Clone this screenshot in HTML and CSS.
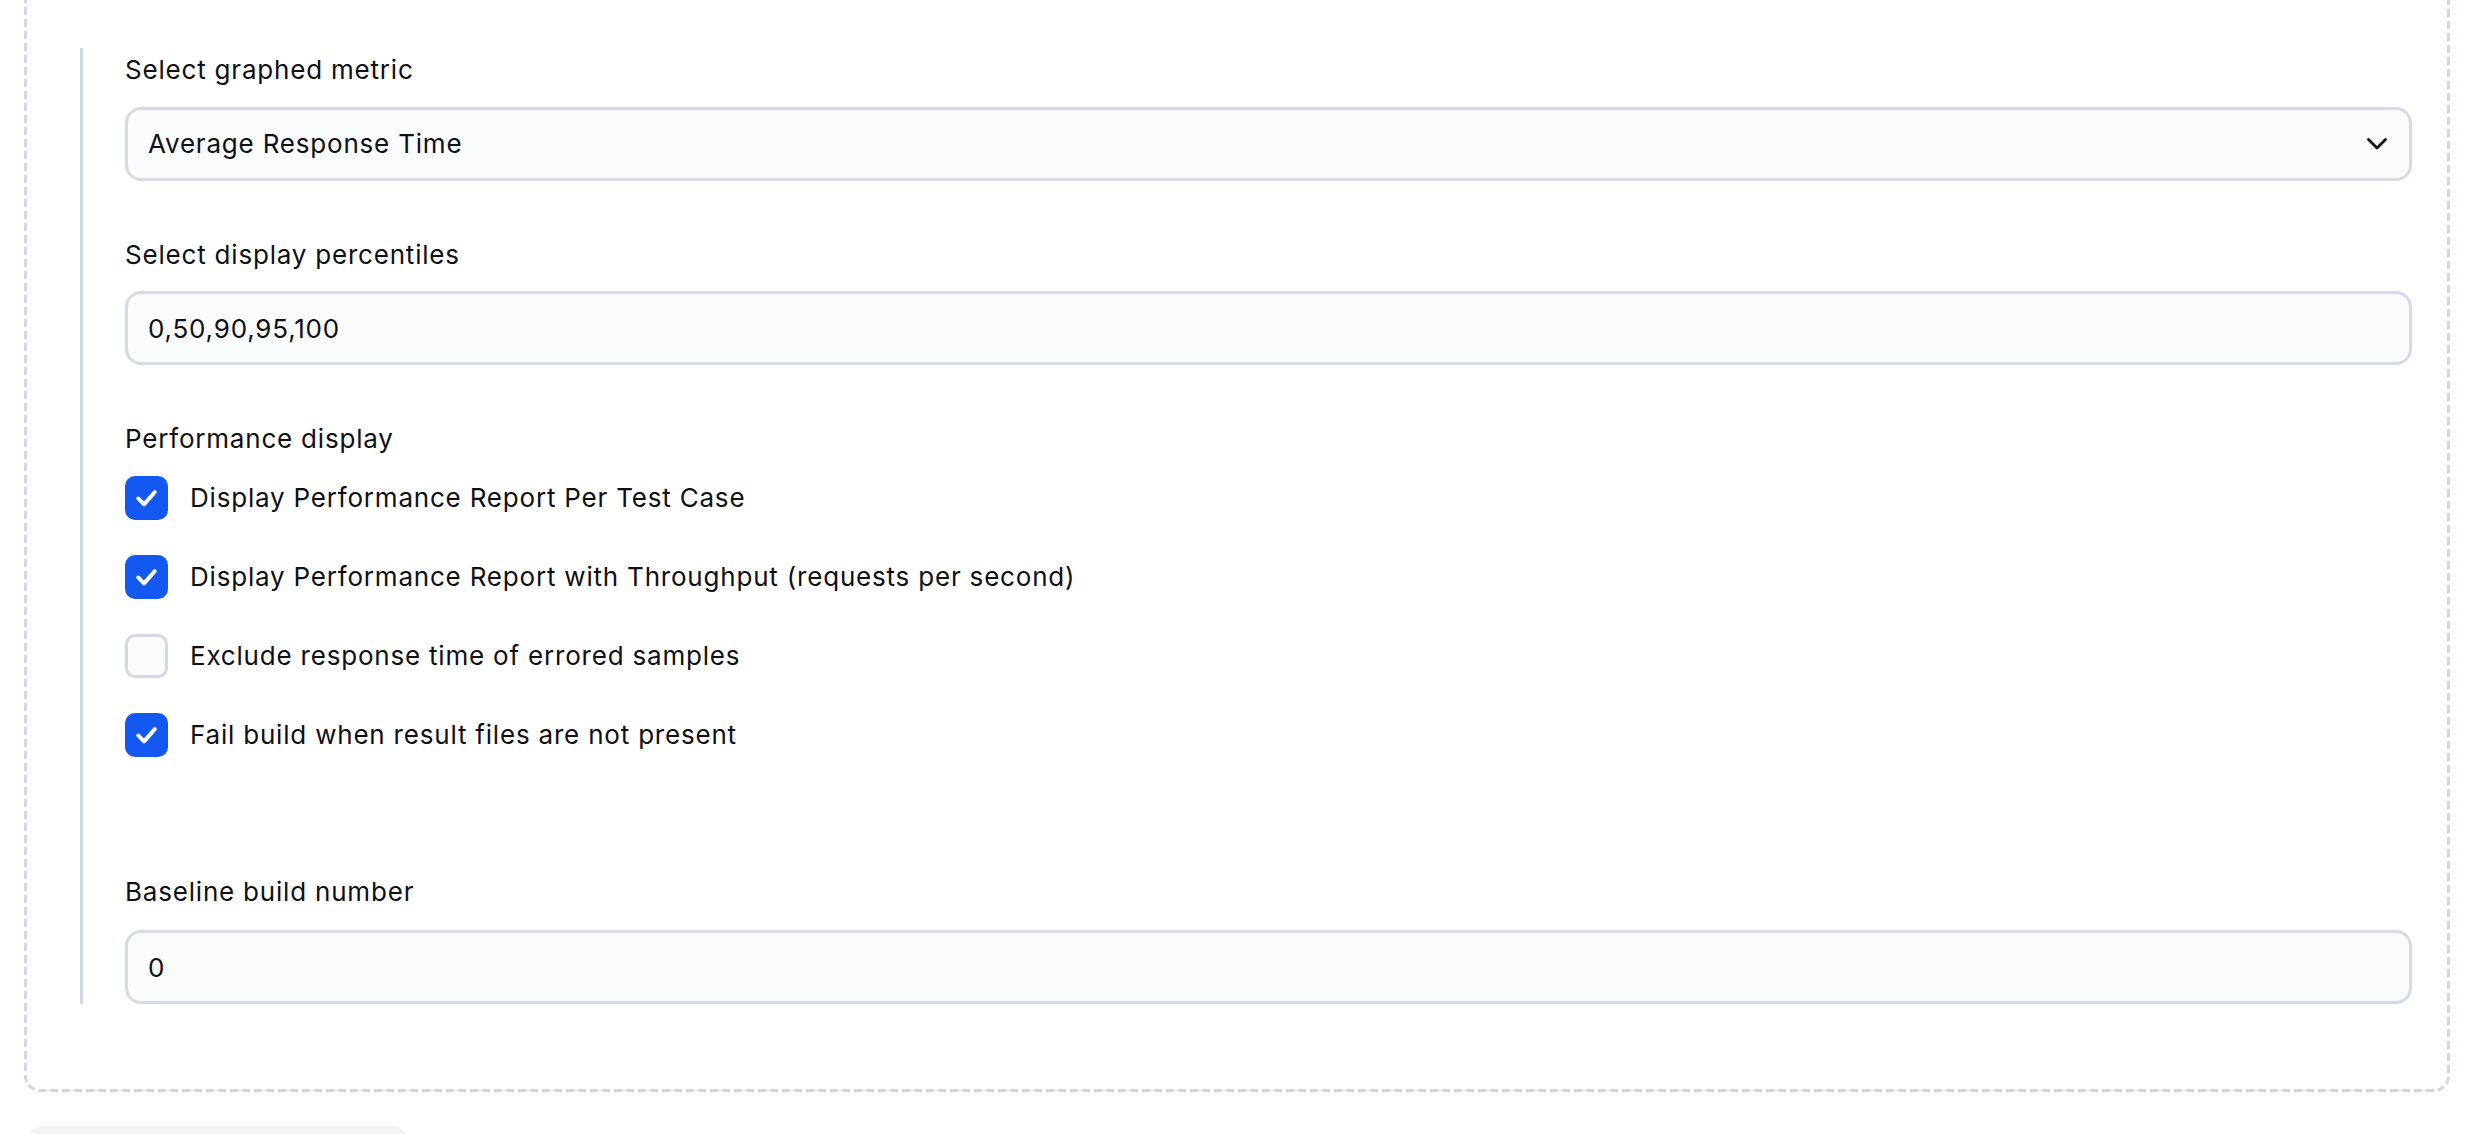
FILE: index.html
```html
<!DOCTYPE html>
<html lang="en">

<head>
  <meta charset="UTF-8">
  <meta name="viewport" content="width=device-width, initial-scale=1.0">
  <title>Performance Report</title>
  <link rel="stylesheet" href="styles.css">
</head>

<body>
  <div class="repeated-chunk">
    <div class="section">
      <div class="form-group">
        <label for="metric">Select graphed metric</label>
        <div class="select-wrap">
          <select id="metric">
            <option selected>Average Response Time</option>
            <option>Median Response Time</option>
            <option>Percentile Response Time</option>
          </select>
          <svg class="chevron" viewBox="0 0 20 12" width="20" height="12">
            <path d="M1.5 1.5 L10 10 L18.5 1.5" fill="none" stroke="#14141f" stroke-width="2.8" stroke-linecap="round" stroke-linejoin="round"/>
          </svg>
        </div>
      </div>

      <div class="form-group">
        <label for="percentiles">Select display percentiles</label>
        <input type="text" id="percentiles" value="0,50,90,95,100">
      </div>

      <div class="form-group">
        <label>Performance display</label>
        <div class="checkbox-list">
          <label class="checkbox">
            <input type="checkbox" checked>
            <span class="box"></span>
            Display Performance Report Per Test Case
          </label>
          <label class="checkbox">
            <input type="checkbox" checked>
            <span class="box"></span>
            Display Performance Report with Throughput (requests per second)
          </label>
          <label class="checkbox">
            <input type="checkbox">
            <span class="box"></span>
            Exclude response time of errored samples
          </label>
          <label class="checkbox">
            <input type="checkbox" checked>
            <span class="box"></span>
            Fail build when result files are not present
          </label>
        </div>
      </div>

      <div class="form-group baseline">
        <label for="baseline">Baseline build number</label>
        <input type="text" id="baseline" value="0">
      </div>
    </div>
  </div>

  <div class="add-button"></div>
</body>

</html>
```

FILE: styles.css
```css
body {
  margin: 0;
  background: #ffffff;
  color: #0f0f16;
  font-family: Inter, "Noto Sans", sans-serif;
  font-size: 26px;
  letter-spacing: 0.8px;
  line-height: 37.5px;
}

/* dashed frame drawn as svg so the dash length matches */
.repeated-chunk {
  margin: -60px 26px 0 24px;
  padding: 108px 38px 88px 56px;
  border-radius: 16px;
  background: url("data:image/svg+xml;utf8,<svg xmlns='http://www.w3.org/2000/svg'><rect x='0' y='0' width='100%' height='100%' rx='16' ry='16' fill='none' stroke='%23d0d6e4' stroke-width='6' stroke-dasharray='8 4'/></svg>") no-repeat;
}

.section {
  border-left: 3px solid #d3d9e6;
  padding: 3px 0 0 42px;
}

.form-group {
  margin-bottom: 55px;
}

.form-group:last-child {
  margin-bottom: 0;
}

.form-group > label {
  display: block;
  margin-bottom: 18px;
}

.baseline {
  margin-top: 116px;
}

.baseline > label {
  margin-bottom: 20px;
}

input[type="text"],
select {
  display: block;
  box-sizing: border-box;
  width: 100%;
  height: 74px;
  padding: 0 20px;
  border: 3px solid #d5dbe6;
  border-radius: 16px;
  background: #fafbfd;
  color: #0f0f16;
  font-family: inherit;
  font-size: 26px;
  letter-spacing: 0.8px;
  outline: none;
}

.select-wrap {
  position: relative;
}

select {
  appearance: none;
  -webkit-appearance: none;
}

.chevron {
  position: absolute;
  right: 25px;
  top: 31px;
  pointer-events: none;
}

.checkbox-list {
  display: flex;
  flex-direction: column;
  gap: 35px;
}

.checkbox {
  display: flex;
  align-items: center;
  gap: 22px;
  height: 44px;
}

.checkbox input {
  display: none;
}

.checkbox .box {
  box-sizing: border-box;
  width: 43px;
  height: 44px;
  border: 3px solid #d3d9e6;
  border-radius: 10px;
  background: #f9fbfd;
}

.checkbox input:checked + .box {
  border: none;
  background: #1358f0 url("data:image/svg+xml;utf8,<svg xmlns='http://www.w3.org/2000/svg' viewBox='0 0 44 44'><path d='M13.5 22.5 L19.5 28.5 L30.5 16' fill='none' stroke='white' stroke-width='4' stroke-linecap='round' stroke-linejoin='round'/></svg>") center / 100% 100% no-repeat;
}

.add-button {
  margin: 34px 0 0 27px;
  width: 381px;
  height: 78px;
  border-radius: 16px;
  background: #f2f3f6;
}
```
